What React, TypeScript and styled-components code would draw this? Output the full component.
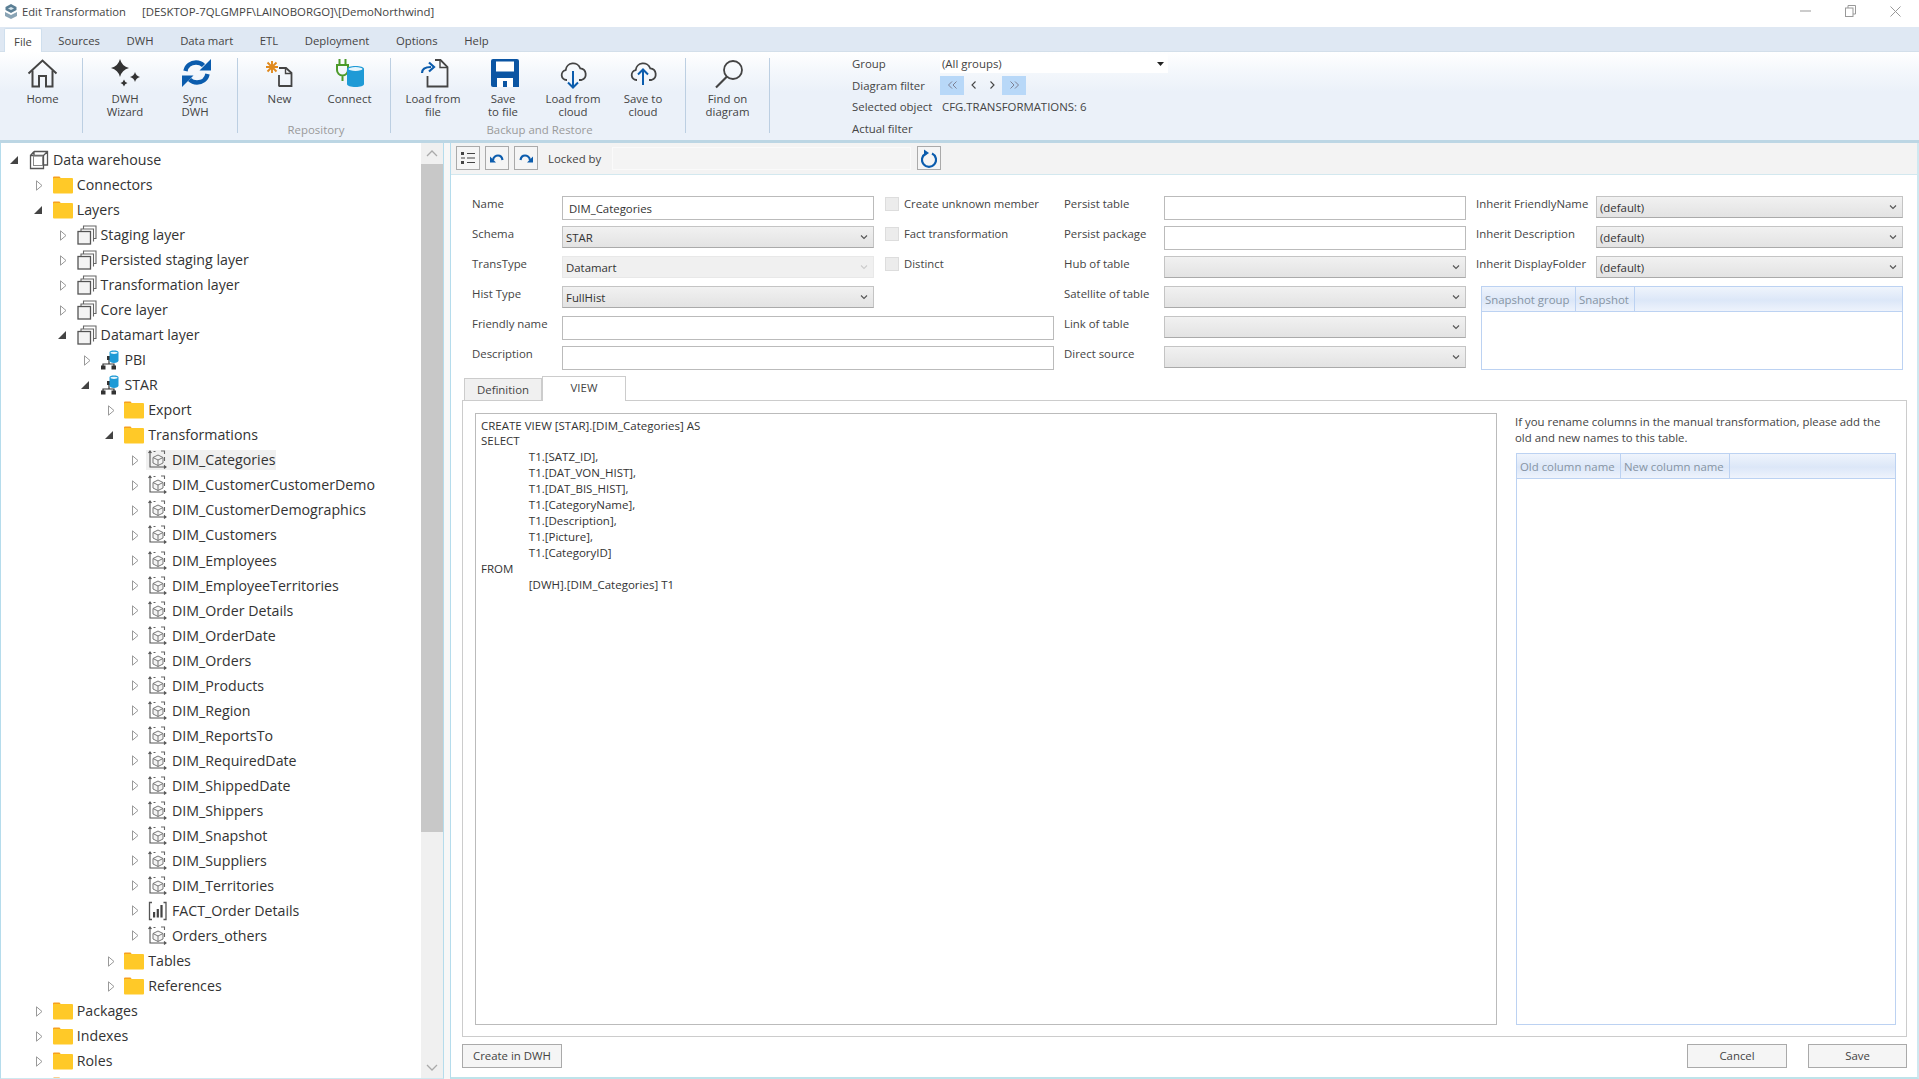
import React from "react";
import styled, { createGlobalStyle } from "styled-components";

const GlobalStyle = createGlobalStyle`
  html, body { margin: 0; padding: 0; background: #fff; overflow: hidden; }
  body { font-family: "Open Sans", "Noto Sans", "Liberation Sans", sans-serif; color: #333; }
  * { box-sizing: border-box; }
`;

/* ---------- ribbon icons ---------- */
const Svg36 = ({ children }: { children: React.ReactNode }) => (
  <svg width="36" height="32" viewBox="0 0 36 32" fill="none">{children}</svg>
);

const HomeIcon = () => (
  <Svg36>
    <path d="M3.5 15.5 17.5 2.5l14 13" stroke="#444" strokeWidth="2" />
    <path d="M7.5 12.5V28.5h6.5V18h7v10.5h6.5V12.5" stroke="#444" strokeWidth="2" />
  </Svg36>
);
const star = (x: number, y: number, r: number) =>
  `M${x} ${y - r}Q${x + r * 0.2} ${y - r * 0.2} ${x + r} ${y}Q${x + r * 0.2} ${y + r * 0.2} ${x} ${y + r}Q${x - r * 0.2} ${y + r * 0.2} ${x - r} ${y}Q${x - r * 0.2} ${y - r * 0.2} ${x} ${y - r}Z`;
const WizardIcon = () => (
  <Svg36>
    <path d={star(13, 10, 9)} fill="#333" />
    <path d={star(28, 19, 5)} fill="#333" />
    <path d={star(17, 25, 3.5)} fill="#333" />
  </Svg36>
);
const SyncIcon = () => (
  <Svg36>
    <path d="M8.5 13C9.5 7.5 14 4.5 19 4.5c3 0 5.5 1 7.5 3" stroke="#0b5cad" strokeWidth="4.4" />
    <path d="M34 1v11.5H22.5z" fill="#0b5cad" />
    <path d="M30.5 16c-1 5.500-5.500 8.500-10.500 8.500-3 0-5.500-1-7.500-3" stroke="#0b5cad" strokeWidth="4.4" />
    <path d="M5 29V17.500h11.500z" fill="#0b5cad" />
  </Svg36>
);
const NewIcon = () => (
  <Svg36>
    <path d="M10 3v12M4 9h12M5.500 4.500l9 9M14.500 4.500l-9 9" stroke="#e08a1e" strokeWidth="1.9" />
    <path d="M17 10h7l5.500 5v13H17" stroke="#444" strokeWidth="1.8" />
    <path d="M17 28.500V17" stroke="#444" strokeWidth="1.8" />
    <path d="M23.500 10v5.500h6" stroke="#444" strokeWidth="1.4" />
  </Svg36>
);
const ConnectIcon = () => (
  <Svg36>
    <path d="M7.500 1v6M13.500 1v6M5 7h11v5a5.500 5.500 0 0 1-11 0zM10.500 17v6" stroke="#4c9a2a" strokeWidth="2" />
    <path d="M15 11c0-2 3.800-3 8.500-3s8.500 1 8.500 3v15c0 2-3.800 3-8.500 3S15 28 15 26z" fill="#1e9ad6" />
    <ellipse cx="23.500" cy="11" rx="7" ry="1.900" fill="#e6f5fc" />
  </Svg36>
);
const LoadFileIcon = () => (
  <Svg36>
    <path d="M20 2h5.500l7 7v19.500H12.500V18" stroke="#444" strokeWidth="1.8" />
    <path d="M25 2v7.500h7.500" stroke="#444" strokeWidth="1.4" />
    <path d="M7 15c0-4 3-6 9-6" stroke="#0b5cad" strokeWidth="2.2" />
    <path d="M14 4.500l5 4.500-5 4.500" stroke="#0b5cad" strokeWidth="2.2" />
  </Svg36>
);
const SaveIcon = () => (
  <Svg36>
    <path d="M8 1h24a2 2 0 0 1 2 2v26H8a2 2 0 0 1-2-2V3a2 2 0 0 1 2-2z" fill="#0b55a3" />
    <rect x="11" y="3.500" width="18" height="10" fill="#fff" />
    <rect x="12" y="20" width="16" height="9" fill="#fff" />
    <rect x="18" y="23" width="4" height="6" fill="#0b55a3" />
  </Svg36>
);
const cloud = "M12 22H11.500a5 5 0 0 1-.800-9.900a7.500 7.500 0 0 1 14.500-1.800a6 6 0 0 1 1.300 11.700H24";
const CloudDownIcon = () => (
  <Svg36>
    <path d={cloud} stroke="#444" strokeWidth="1.8" />
    <path d="M18 13v16M13 24.500l5 5 5-5" stroke="#0b5cad" strokeWidth="2" />
  </Svg36>
);
const CloudUpIcon = () => (
  <Svg36>
    <path d={cloud} stroke="#444" strokeWidth="1.8" />
    <path d="M18 27V12M13 16.500l5-5 5 5" stroke="#0b5cad" strokeWidth="2" />
  </Svg36>
);
const FindIcon = () => (
  <Svg36>
    <circle cx="23" cy="12" r="9" stroke="#444" strokeWidth="1.800" />
    <path d="M17 18.500 6 29.500" stroke="#444" strokeWidth="2.200" />
  </Svg36>
);

/* ---------- tree icons ---------- */
const Svg20 = ({ children }: { children: React.ReactNode }) => (
  <svg width="20" height="20" viewBox="0 0 20 20" fill="none">{children}</svg>
);
const FolderIcon = () => (
  <Svg20>
    <path d="M0 2.500a1 1 0 0 1 1-1h5.500L8.500 4H0z" fill="#f7a01e" />
    <rect x="0" y="3" width="20" height="15.500" rx="1" fill="#ffc928" />
  </Svg20>
);
const CubeIcon = () => (
  <Svg20>
    <path d="M1.500 5.500h13v13h-13zM5 1.500h13.500V15H15M5 1.500 1.500 5.500M18.500 1.500l-4 4M5 1.500V5" stroke="#555" strokeWidth="1.300" />
    <rect x="4.500" y="6" width="9" height="9.500" stroke="#888" strokeWidth="1" />
  </Svg20>
);
const LayerIcon = () => (
  <Svg20>
    <path d="M6.500 4V1h12.500v12.500h-3M4 6.500V4h12.500v12.500" stroke="#666" strokeWidth="1.100" />
    <rect x="1" y="6.500" width="12.500" height="12.500" stroke="#555" strokeWidth="1.300" fill="#f4f4f4" />
  </Svg20>
);
const SchemaIcon = () => (
  <Svg20>
    <path d="M9 7v4M3 18v-4h11v4M9 11v3" stroke="#333" strokeWidth="1.200" />
    <rect x="7" y="6" width="4.500" height="4" fill="#333" />
    <rect x="1" y="15.500" width="4.500" height="4" fill="#333" />
    <rect x="11.500" y="15.500" width="4.500" height="4" fill="#333" />
    <path d="M9.500 2.500C9.500 1 11.500.5 14 .5s4.500.5 4.500 2v8c0 1.500-2 2.500-4.500 2.500s-4.500-1-4.500-2.500z" fill="#1e9ad6" />
    <ellipse cx="14" cy="2.800" rx="3.500" ry="1.100" fill="#e6f5fc" />
  </Svg20>
);
const DimIcon = () => (
  <Svg20>
    <path d="M2 1v16h16M.5 3 2 1l1.500 2M16 15.500l2 1.500-2 1.500" stroke="#555" strokeWidth="1.100" />
    <path d="M5.500 1.500h2M13 1h3.500v3M16.500 7v4" stroke="#666" strokeWidth="1.100" />
    <path d="M10 5l5 2.500v5.500l-5 2.500-5-2.500V7.500zM5 7.500l5 2.500 5-2.500M10 10v5.500" stroke="#777" strokeWidth="1" fill="#f4f4f4" />
  </Svg20>
);
const FactIcon = () => (
  <Svg20>
    <path d="M4 1.500H1.500v17H4M15.500 1.500h2.500v17h-2.500" stroke="#555" strokeWidth="1.300" />
    <rect x="5" y="11" width="2.200" height="5.500" fill="#444" />
    <rect x="8.700" y="8" width="2.200" height="8.500" fill="#444" />
    <rect x="12.400" y="4" width="2.200" height="12.500" fill="#444" />
  </Svg20>
);

const ICONS = {
  folder: FolderIcon,
  cube: CubeIcon,
  layer: LayerIcon,
  schema: SchemaIcon,
  dim: DimIcon,
  fact: FactIcon,
};
type IconName = keyof typeof ICONS;

interface TreeItemI {
  level: number;
  open?: boolean;
  icon: IconName;
  label: string;
  selected?: boolean;
}

const dims = [
  "DIM_CustomerCustomerDemo", "DIM_CustomerDemographics", "DIM_Customers", "DIM_Employees",
  "DIM_EmployeeTerritories", "DIM_Order Details", "DIM_OrderDate", "DIM_Orders", "DIM_Products",
  "DIM_Region", "DIM_ReportsTo", "DIM_RequiredDate", "DIM_ShippedDate", "DIM_Shippers",
  "DIM_Snapshot", "DIM_Suppliers", "DIM_Territories",
];

const tree: TreeItemI[] = [
  { level: 0, open: true, icon: "cube", label: "Data warehouse" },
  { level: 1, icon: "folder", label: "Connectors" },
  { level: 1, open: true, icon: "folder", label: "Layers" },
  { level: 2, icon: "layer", label: "Staging layer" },
  { level: 2, icon: "layer", label: "Persisted staging layer" },
  { level: 2, icon: "layer", label: "Transformation layer" },
  { level: 2, icon: "layer", label: "Core layer" },
  { level: 2, open: true, icon: "layer", label: "Datamart layer" },
  { level: 3, icon: "schema", label: "PBI" },
  { level: 3, open: true, icon: "schema", label: "STAR" },
  { level: 4, icon: "folder", label: "Export" },
  { level: 4, open: true, icon: "folder", label: "Transformations" },
  { level: 5, icon: "dim", label: "DIM_Categories", selected: true },
  ...dims.map((label): TreeItemI => ({ level: 5, icon: "dim", label })),
  { level: 5, icon: "fact", label: "FACT_Order Details" },
  { level: 5, icon: "dim", label: "Orders_others" },
  { level: 4, icon: "folder", label: "Tables" },
  { level: 4, icon: "folder", label: "References" },
  { level: 1, icon: "folder", label: "Packages" },
  { level: 1, icon: "folder", label: "Indexes" },
  { level: 1, icon: "folder", label: "Roles" },
  { level: 1, icon: "folder", label: "" },
];

const menus = ["Sources", "DWH", "Data mart", "ETL", "Deployment", "Options", "Help"];

const sql = `CREATE VIEW [STAR].[DIM_Categories] AS
SELECT
\tT1.[SATZ_ID],
\tT1.[DAT_VON_HIST],
\tT1.[DAT_BIS_HIST],
\tT1.[CategoryName],
\tT1.[Description],
\tT1.[Picture],
\tT1.[CategoryID]
FROM
\t[DWH].[DIM_Categories] T1`;

const Chevron = ({ faint }: { faint?: boolean }) => (
  <svg width="8" height="6" viewBox="0 0 8 6" fill="none">
    <path d="M1 1.500 4 4.500 7 1.500" stroke={faint ? "#ccc" : "#555"} strokeWidth="1.100" />
  </svg>
);

const Select = ({ value, disabled, column, row }: { value?: string; disabled?: boolean; column: number; row: number }) => (
  <SelectBox $disabled={disabled} $column={column} $row={row}>
    <span>{value}</span>
    <Chevron faint={disabled} />
  </SelectBox>
);

const App = () => {
  return (
    <Window>
      <GlobalStyle />
      <TitleBar>
        <AppIcon viewBox="0 0 14 16" width="14" height="16">
          <path d="M7 1 12.500 4v3L7 10 1.500 7V4z" fill="#5b7f95" />
          <path d="M1 9l6 3 6-3v4l-6 3-6-3z" fill="#8aa4b5" />
          <path d="M7 4 10 5.500 7 7 4 5.500z" fill="#d6e3ea" />
        </AppIcon>
        <TitleText>Edit Transformation</TitleText>
        <TitlePath>[DESKTOP-7QLGMPF\LAINOBORGO]\[DemoNorthwind]</TitlePath>
        <WindowButtons>
          <svg width="11" height="2" viewBox="0 0 11 2"><path d="M0 1h11" stroke="#999" /></svg>
          <svg width="11" height="12" viewBox="0 0 11 12" fill="none">
            <rect x=".5" y="3" width="7.500" height="8.500" stroke="#999" />
            <path d="M3 3V.5h7.500V9H8" stroke="#999" />
          </svg>
          <svg width="11" height="11" viewBox="0 0 11 11"><path d="M.5.500l10 10M10.500.500l-10 10" stroke="#999" /></svg>
        </WindowButtons>
      </TitleBar>

      <MenuBar>
        <ActiveMenu>File</ActiveMenu>
        {menus.map((m) => (
          <MenuItem key={m}>{m}</MenuItem>
        ))}
      </MenuBar>

      <Ribbon>
        <RibbonGroup $width={83} $inset={3}>
          <RibbonButtons>
            <RibbonButton><HomeIcon /><span>Home</span></RibbonButton>
          </RibbonButtons>
        </RibbonGroup>
        <RibbonGroup $width={155}>
          <RibbonButtons>
            <RibbonButton><WizardIcon /><span>DWH<br />Wizard</span></RibbonButton>
            <RibbonButton><SyncIcon /><span>Sync<br />DWH</span></RibbonButton>
          </RibbonButtons>
        </RibbonGroup>
        <RibbonGroup $width={153} $inset={1}>
          <RibbonButtons>
            <RibbonButton><NewIcon /><span>New</span></RibbonButton>
            <RibbonButton><ConnectIcon /><span>Connect</span></RibbonButton>
          </RibbonButtons>
          <GroupLabel>Repository</GroupLabel>
        </RibbonGroup>
        <RibbonGroup $width={295}>
          <RibbonButtons>
            <RibbonButton><LoadFileIcon /><span>Load from<br />file</span></RibbonButton>
            <RibbonButton><SaveIcon /><span>Save<br />to file</span></RibbonButton>
            <RibbonButton><CloudDownIcon /><span>Load from<br />cloud</span></RibbonButton>
            <RibbonButton><CloudUpIcon /><span>Save to<br />cloud</span></RibbonButton>
          </RibbonButtons>
          <GroupLabel>Backup and Restore</GroupLabel>
        </RibbonGroup>
        <RibbonGroup $width={84}>
          <RibbonButtons>
            <RibbonButton><FindIcon /><span>Find on<br />diagram</span></RibbonButton>
          </RibbonButtons>
        </RibbonGroup>
        <RibbonInfo>
          <span>Group</span>
          <GroupCombo>
            (All groups)
            <svg width="7" height="4" viewBox="0 0 7 4"><path d="M0 0h7L3.500 4z" fill="#222" /></svg>
          </GroupCombo>
          <span>Diagram filter</span>
          <Pager>
            <PagerButton $on>
              <svg width="9" height="8" viewBox="0 0 9 8" fill="none"><path d="M4 .5.500 4 4 7.500M8.500.5 5 4l3.500 3.500" stroke="#778" strokeWidth=".9" /></svg>
            </PagerButton>
            <PagerButton>
              <svg width="5" height="8" viewBox="0 0 5 8" fill="none"><path d="M4.500.5 1 4l3.500 3.500" stroke="#444" strokeWidth="1.100" /></svg>
            </PagerButton>
            <PagerButton>
              <svg width="5" height="8" viewBox="0 0 5 8" fill="none"><path d="M.5.500 4 4 .5 7.500" stroke="#444" strokeWidth="1.100" /></svg>
            </PagerButton>
            <PagerButton $on>
              <svg width="9" height="8" viewBox="0 0 9 8" fill="none"><path d="M.5.500 4 4 .5 7.500M5 .5 8.500 4 5 7.500" stroke="#778" strokeWidth=".9" /></svg>
            </PagerButton>
          </Pager>
          <span>Selected object</span>
          <InfoValue>CFG.TRANSFORMATIONS: 6</InfoValue>
          <span>Actual filter</span>
          <span />
        </RibbonInfo>
      </Ribbon>

      <Main>
        <TreePanel>
          <TreeList>
            {tree.map((t, i) => {
              const Icon = ICONS[t.icon];
              return (
                <TreeRow key={i} $level={t.level}>
                  <Arrow $open={t.open}>
                    {t.open ? (
                      <svg width="8" height="8" viewBox="0 0 8 8"><path d="M8 0v8H0z" fill="#444" /></svg>
                    ) : (
                      <svg width="7" height="11" viewBox="0 0 7 11" fill="none"><path d="M.5.800 6 5.500.5 10.200z" stroke="#999" /></svg>
                    )}
                  </Arrow>
                  <TreeEntry $selected={t.selected}>
                    <Icon />
                    <TreeLabel>{t.label}</TreeLabel>
                  </TreeEntry>
                </TreeRow>
              );
            })}
          </TreeList>
          <ScrollBar>
            <ScrollButton>
              <svg width="12" height="7" viewBox="0 0 12 7" fill="none"><path d="M1 6l5-5 5 5" stroke="#aaa" strokeWidth="1.300" /></svg>
            </ScrollButton>
            <ScrollThumb />
            <ScrollTrack />
            <ScrollButton>
              <svg width="12" height="7" viewBox="0 0 12 7" fill="none"><path d="M1 1l5 5 5-5" stroke="#aaa" strokeWidth="1.300" /></svg>
            </ScrollButton>
          </ScrollBar>
        </TreePanel>
        <Splitter />
        <EditorPanel>
          <Toolbar>
            <ToolButton>
              <svg width="16" height="15" viewBox="0 0 16 15" fill="none">
                <rect x="1" y="1" width="3" height="3" fill="#444" />
                <rect x="1" y="10" width="3" height="3" fill="#444" />
                <path d="M7 2.500h8M7 7h8M7 11.500h8M1 7h4" stroke="#444" strokeWidth="1.200" />
              </svg>
            </ToolButton>
            <ToolButton>
              <svg width="14" height="10" viewBox="0 0 14 10" fill="none">
                <path d="M3 7C3.500 4 6 2.500 8 2.500S12 4 12.500 7" stroke="#0b5cad" strokeWidth="2.200" />
                <path d="M0 3.500 6 9.500H0z" fill="#0b5cad" />
              </svg>
            </ToolButton>
            <ToolButton>
              <svg width="14" height="10" viewBox="0 0 14 10" fill="none">
                <path d="M11 7C10.500 4 8 2.500 6 2.500S2 4 1.500 7" stroke="#0b5cad" strokeWidth="2.200" />
                <path d="M14 3.500 8 9.500H14z" fill="#0b5cad" />
              </svg>
            </ToolButton>
            <LockedLabel>Locked by</LockedLabel>
            <LockedField />
            <ToolButton>
              <svg width="16" height="19" viewBox="0 0 16 19" fill="none">
                <path d="M5 4.500a7 7 0 1 0 6 0" stroke="#0b5cad" strokeWidth="2.200" />
                <path d="M3 .500v7l5-3.500z" fill="#0b5cad" />
              </svg>
            </ToolButton>
          </Toolbar>

          <FormGrid>
            <Label $column={1} $row={1}>Name</Label>
            <Input $column={2} $row={1} $span={1}>DIM_Categories</Input>
            <CheckRow $row={1}><CheckBox />Create unknown member</CheckRow>
            <Label $column={6} $row={1}>Persist table</Label>
            <Input $column={7} $row={1} $span={1} />
            <Label $column={9} $row={1}>Inherit FriendlyName</Label>
            <Select column={10} row={1} value="(default)" />

            <Label $column={1} $row={2}>Schema</Label>
            <Select column={2} row={2} value="STAR" />
            <CheckRow $row={2}><CheckBox />Fact transformation</CheckRow>
            <Label $column={6} $row={2}>Persist package</Label>
            <Input $column={7} $row={2} $span={1} />
            <Label $column={9} $row={2}>Inherit Description</Label>
            <Select column={10} row={2} value="(default)" />

            <Label $column={1} $row={3}>TransType</Label>
            <Select column={2} row={3} value="Datamart" disabled />
            <CheckRow $row={3}><CheckBox />Distinct</CheckRow>
            <Label $column={6} $row={3}>Hub of table</Label>
            <Select column={7} row={3} />
            <Label $column={9} $row={3}>Inherit DisplayFolder</Label>
            <Select column={10} row={3} value="(default)" />

            <Label $column={1} $row={4}>Hist Type</Label>
            <Select column={2} row={4} value="FullHist" />
            <Label $column={6} $row={4}>Satellite of table</Label>
            <Select column={7} row={4} />
            <SnapshotGrid>
              <GridHeader>
                <HeaderCell $width={94}>Snapshot group</HeaderCell>
                <HeaderCell $width={59}>Snapshot</HeaderCell>
              </GridHeader>
            </SnapshotGrid>

            <Label $column={1} $row={5}>Friendly name</Label>
            <Input $column={2} $row={5} $span={3} />
            <Label $column={6} $row={5}>Link of table</Label>
            <Select column={7} row={5} />

            <Label $column={1} $row={6}>Description</Label>
            <Input $column={2} $row={6} $span={3} />
            <Label $column={6} $row={6}>Direct source</Label>
            <Select column={7} row={6} />
          </FormGrid>

          <Tabs>
            <Tab>Definition</Tab>
            <ActiveTab>VIEW</ActiveTab>
          </Tabs>
          <TabBody>
            <SqlBox>{sql}</SqlBox>
            <SideColumn>
              <Note>If you rename columns in the manual transformation, please add the old and new names to this table.</Note>
              <ColumnGrid>
                <GridHeader>
                  <HeaderCell $width={104}>Old column name</HeaderCell>
                  <HeaderCell $width={109}>New column name</HeaderCell>
                </GridHeader>
              </ColumnGrid>
            </SideColumn>
          </TabBody>
          <Footer>
            <PlainButton $width={100}>Create in DWH</PlainButton>
            <FooterRight>
              <PlainButton $width={100}>Cancel</PlainButton>
              <PlainButton $width={99}>Save</PlainButton>
            </FooterRight>
          </Footer>
        </EditorPanel>
      </Main>
    </Window>
  );
};

export default App;

const Window = styled.div`
  display: flex;
  flex-direction: column;
  width: 1919px;
  height: 1079px;
  overflow: hidden;
  background: #fff;
`;

const TitleBar = styled.div`
  display: flex;
  align-items: center;
  height: 27px;
  padding: 0 18px 5px 4px;
  font-size: 11.2px;
  color: #444;
`;

const AppIcon = styled.svg`
  margin-right: 4px;
`;

const TitleText = styled.span`
  width: 120px;
`;

const TitlePath = styled.span`
  font-size: 11.4px;
`;

const WindowButtons = styled.div`
  display: flex;
  align-items: center;
  gap: 34px;
  margin-left: auto;
`;

const MenuBar = styled.div`
  display: flex;
  align-items: flex-end;
  height: 25px;
  padding-left: 4px;
  background: #dfe8f3;
  border-bottom: 1px solid #d3dfea;
  font-size: 11.3px;
  color: #444;
`;

const MenuItem = styled.div`
  padding: 0 13.3px;
  line-height: 20px;
`;

const ActiveMenu = styled.div`
  width: 38px;
  margin-right: 3px;
  height: 24px;
  margin-bottom: -1px;
  line-height: 25px;
  text-align: center;
  background: #fff;
  border: 1px solid #cfdfee;
  border-bottom: none;
  border-radius: 2px 2px 0 0;
`;

const Ribbon = styled.div`
  display: flex;
  height: 88px;
  padding-top: 6px;
  background: linear-gradient(#ffffff 0%, #f5f8fc 20%, #ebf1f9 45%, #ebf1f9 100%);
  font-size: 11.4px;
  color: #444;
`;

const RibbonGroup = styled.div<{ $width: number; $inset?: number }>`
  display: flex;
  flex-direction: column;
  width: ${(p) => p.$width}px;
  height: 75px;
  padding-left: ${(p) => p.$inset ?? 0}px;
  border-right: 1px solid #bccfe2;
`;

const RibbonButtons = styled.div`
  display: flex;
  justify-content: center;
`;

const RibbonButton = styled.div`
  display: flex;
  flex-direction: column;
  align-items: center;
  width: 70px;
  line-height: 13px;
  text-align: center;

  span {
    margin-top: 2px;
  }
`;

const GroupLabel = styled.div`
  margin-top: auto;
  margin-bottom: -4px;
  padding-left: 3px;
  line-height: 14px;
  text-align: center;
  color: #9a9a9a;
`;

const RibbonInfo = styled.div`
  display: grid;
  grid-template-columns: 88px 228px;
  grid-auto-rows: 21.5px;
  align-items: center;
  margin-left: 82px;
  margin-top: -5px;
  height: 86px;
  white-space: nowrap;
`;

const GroupCombo = styled.div`
  display: flex;
  align-items: center;
  justify-content: space-between;
  height: 19px;
  padding: 0 4px 0 2px;
  background: #fff;
`;

const Pager = styled.div`
  display: flex;
`;

const PagerButton = styled.div<{ $on?: boolean }>`
  display: flex;
  align-items: center;
  justify-content: center;
  width: ${(p) => (p.$on ? 24 : 19)}px;
  height: 19px;
  background: ${(p) => (p.$on ? "#b8d8f8" : "transparent")};
`;

const InfoValue = styled.span`
  padding-left: 2px;
`;

const Main = styled.div`
  display: flex;
  flex: 1;
  min-height: 0;
  border-top: 3px solid #bcd6e4;
`;

const TreePanel = styled.div`
  display: flex;
  width: 444px;
  height: 936px;
  border-left: 1px solid #b5dcec;
  border-right: 1px solid #b5dcec;
  border-bottom: 1px solid #cfe8f0;
`;

const TreeList = styled.div`
  flex: 1;
  padding-top: 4.5px;
  overflow: hidden;
`;

const TreeRow = styled.div<{ $level: number }>`
  display: flex;
  align-items: center;
  height: 25.04px;
  padding-left: ${(p) => 10 + p.$level * 23.8}px;
`;

const Arrow = styled.div<{ $open?: boolean }>`
  display: flex;
  align-items: center;
  justify-content: center;
  width: 14px;
  margin-right: 4px;
  margin-left: -2px;
  padding-right: ${(p) => (p.$open ? 4 : 0)}px;
`;

const TreeEntry = styled.div<{ $selected?: boolean }>`
  display: flex;
  align-items: center;
  height: 20px;
  padding: 0 1px 0 2px;
  background: ${(p) => (p.$selected ? "#f0f0f0" : "transparent")};
`;

const TreeLabel = styled.span`
  margin-left: 4px;
  font-size: 14.2px;
  line-height: 20px;
  color: #333;
  white-space: nowrap;
`;

const ScrollBar = styled.div`
  display: flex;
  flex-direction: column;
  width: 22px;
  background: #f0f0f0;
`;

const ScrollButton = styled.div`
  display: flex;
  align-items: center;
  justify-content: center;
  height: 21px;
`;

const ScrollThumb = styled.div`
  height: 668px;
  background: #c8c8c8;
`;

const ScrollTrack = styled.div`
  flex: 1;
`;

const Splitter = styled.div`
  width: 6px;
  background: #f7f7f7;
`;

const EditorPanel = styled.div`
  display: flex;
  flex-direction: column;
  flex: 1;
  height: 936px;
  border-left: 1px solid #b5dcec;
  border-right: 2px solid #cfe8f0;
  border-bottom: 2px solid #bfe3ea;
`;

const Toolbar = styled.div`
  display: flex;
  align-items: center;
  gap: 5px;
  height: 32px;
  padding: 0 0 1px 5px;
  background: #f3f3f3;
  border-bottom: 1px solid #d3e8ef;
`;

const ToolButton = styled.div`
  display: flex;
  align-items: center;
  justify-content: center;
  width: 24px;
  height: 24px;
  background: #f5f5f5;
  border: 1px solid #aaa;
`;

const LockedLabel = styled.span`
  width: 59px;
  margin-left: 5px;
  font-size: 11.4px;
  color: #444;
`;

const LockedField = styled.div`
  width: 299px;
  height: 23px;
  margin-right: 1px;
  background: #f4f4f4;
  border: 1px solid #fafafa;
`;

const FormGrid = styled.div`
  display: grid;
  grid-template-columns: 90px 312px 11px 169px 10px 100px 302px 10px 120px 307px;
  grid-template-rows: repeat(6, 30px);
  margin: 21px 0 0 21px;
  font-size: 11.4px;
  color: #444;
`;

const Label = styled.div<{ $column: number; $row: number }>`
  grid-column: ${(p) => p.$column};
  grid-row: ${(p) => p.$row};
  line-height: 16px;
  white-space: nowrap;
`;

const Input = styled.div<{ $column: number; $row: number; $span: number }>`
  grid-column: ${(p) => p.$column} / span ${(p) => p.$span};
  grid-row: ${(p) => p.$row};
  height: 24px;
  padding-left: 6px;
  line-height: 23px;
  background: #fff;
  border: 1px solid #bbb;
  color: #333;
`;

const SelectBox = styled.div<{ $disabled?: boolean; $column: number; $row: number }>`
  display: flex;
  align-items: center;
  justify-content: space-between;
  grid-column: ${(p) => p.$column};
  grid-row: ${(p) => p.$row};
  height: 22px;
  padding: 0 5px 0 3px;
  background: ${(p) => (p.$disabled ? "#f0f0f0" : "linear-gradient(#f1f1f1, #e3e3e3)")};
  border: 1px solid ${(p) => (p.$disabled ? "#e8e8e8" : "#c4c4c4")};
  border-bottom-color: ${(p) => (p.$disabled ? "#e8e8e8" : "#aaa")};
  color: #333;
`;

const CheckRow = styled.div<{ $row: number }>`
  display: flex;
  align-items: flex-start;
  grid-column: 4;
  grid-row: ${(p) => p.$row};
  gap: 5px;
  font-size: 11.3px;
  line-height: 15px;
  white-space: nowrap;
`;

const CheckBox = styled.span`
  width: 14px;
  height: 14px;
  margin-top: 1px;
  background: #ececec;
  border: 1px solid #ddd;
`;

const SnapshotGrid = styled.div`
  grid-column: 9 / span 2;
  grid-row: 4 / span 3;
  height: 84px;
  margin-left: 5px;
  border: 1px solid #bcd2f2;
`;

const GridHeader = styled.div`
  display: flex;
  height: 25px;
  background: linear-gradient(#eff4fc, #dce7f8 55%, #eef3fc);
  border-bottom: 1px solid #bcd2f2;
`;

const HeaderCell = styled.div<{ $width: number }>`
  width: ${(p) => p.$width}px;
  padding-left: 3px;
  border-right: 1px solid #bcd2f2;
  font-size: 11.4px;
  line-height: 25px;
  color: #8694a3;
  white-space: nowrap;
`;

const Tabs = styled.div`
  display: flex;
  align-items: flex-end;
  height: 24px;
  margin-left: 13px;
`;

const Tab = styled.div`
  width: 78px;
  height: 22px;
  line-height: 22px;
  text-align: center;
  background: #f0f0f0;
  border: 1px solid #ccc;
  border-bottom: none;
  font-size: 11.4px;
  color: #444;
`;

const ActiveTab = styled.div`
  position: relative;
  z-index: 1;
  width: 84px;
  height: 25px;
  margin-bottom: -1px;
  line-height: 21px;
  text-align: center;
  background: #fff;
  border: 1px solid #ccc;
  border-bottom: none;
  font-size: 11.4px;
  color: #444;
`;

const TabBody = styled.div`
  display: flex;
  width: 1445px;
  height: 637px;
  margin-left: 11px;
  padding: 12px 9px 11px 12px;
  border: 1px solid #ccc;
`;

const SqlBox = styled.pre`
  flex-shrink: 0;
  width: 1022px;
  height: 100%;
  margin: 0;
  padding: 3.5px 5px;
  border: 1px solid #bbb;
  font-family: inherit;
  font-size: 11.5px;
  line-height: 15.95px;
  tab-size: 16;
  color: #333;
`;

const SideColumn = styled.div`
  display: flex;
  flex-direction: column;
  flex: 1;
  margin-left: 18px;
  padding-top: 0.5px;
`;

const Note = styled.div`
  width: 375px;
  line-height: 16px;
  font-size: 11.4px;
  color: #444;
`;

const ColumnGrid = styled.div`
  flex: 1;
  width: 380px;
  margin: 7.5px 0 0 1px;
  border: 1px solid #bcd2f2;
`;

const Footer = styled.div`
  display: flex;
  justify-content: space-between;
  width: 1445px;
  margin: 7px 0 0 11px;
`;

const FooterRight = styled.div`
  display: flex;
  gap: 21px;
`;

const PlainButton = styled.div<{ $width: number }>`
  width: ${(p) => p.$width}px;
  height: 24px;
  line-height: 22px;
  text-align: center;
  background: #f5f5f5;
  border: 1px solid #aaa;
  font-size: 11.4px;
  color: #444;
`;
